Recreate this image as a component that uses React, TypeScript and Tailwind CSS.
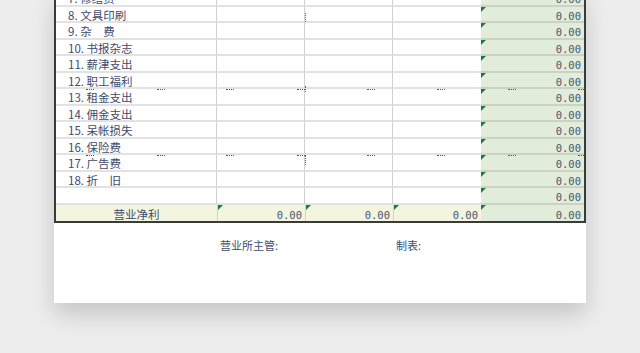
const rows = [
  '7. 修缮费',
  '8. 文具印刷',
  '9. 杂　费',
  '10. 书报杂志',
  '11. 薪津支出',
  '12. 职工福利',
  '13. 租金支出',
  '14. 佣金支出',
  '15. 呆帐损失',
  '16. 保险费',
  '17. 广告费',
  '18. 折　旧',
  '',
];

const dashXs = [86, 157, 226, 297, 367, 437, 508, 578];

function Flag() {
  return (
    <span className="absolute left-0 top-0 h-0 w-0 border-t-[5px] border-r-[5px] border-t-[#1f7a3a] border-r-transparent" />
  );
}

function Num() {
  return (
    <span className="font-['DejaVu_Sans_Mono','Liberation_Mono',monospace] text-[10.5px] leading-none text-[#4a536f]">
      0.00
    </span>
  );
}

export default function App() {
  return (
    <div className="relative h-[353px] w-[640px] overflow-hidden bg-[#ededed] font-['Noto_Sans_CJK_SC',sans-serif]">
      <div className="ml-[54px] mt-[-10px] w-[532px] bg-white shadow-[0_12px_22px_rgba(0,0,0,0.16)]">
        <div className="border-x-2 border-b-2 border-[#3a3a3a]">
          {rows.map((label, i) => (
            <div key={i} className="grid h-[16.5px] grid-cols-[161px_88px_88px_88px_103px]">
              <div className="flex items-end border-b-2 border-r border-b-[#e2e2e2] border-r-[#d0d0d0] pl-[12px] text-[11.5px] leading-none text-[#414b6c]">
                {label}
              </div>
              <div className="border-b-2 border-r border-b-[#e2e2e2] border-r-[#d0d0d0]" />
              <div className="border-b-2 border-r border-b-[#e2e2e2] border-r-[#d0d0d0]" />
              <div className="border-b-2 border-b-[#e2e2e2]" />
              <div className="relative flex items-end justify-end border-b-2 border-b-[#c9d3c2] bg-[#e1ecda] pr-[3px]">
                {i > 0 && <Flag />}
                <Num />
              </div>
            </div>
          ))}
          <div className="grid h-[16px] grid-cols-[161px_88px_88px_88px_103px]">
            <div className="flex items-end justify-center bg-[#f4f5df] text-[11.5px] leading-none text-[#414b6c]">
              营业净利
            </div>
            {[0, 1, 2].map((k) => (
              <div key={k} className="relative flex items-end justify-end border-l border-l-[#d0d0d0] bg-[#f4f5df] pr-[3px]">
                <Flag />
                <Num />
              </div>
            ))}
            <div className="relative flex items-end justify-end bg-[#e1ecda] pr-[3px]">
              <Flag />
              <Num />
            </div>
          </div>
        </div>
        <div className="flex h-[80px] pt-[14px] text-[11px] text-[#414b6c]">
          <span className="ml-[166px]">营业所主管:</span>
          <span className="ml-[118px]">制表:</span>
        </div>
      </div>

      {[89, 155].map((y) =>
        dashXs.map((x) => (
          <span
            key={`${y}-${x}`}
            className="absolute h-0 w-[8px] border-t border-dotted border-[#555]"
            style={{ left: x, top: y }}
          />
        ))
      )}
      <span className="absolute left-[305px] top-[13px] h-[9px] w-0 border-l border-dotted border-[#666]" />
      <span className="absolute left-[305px] top-[86px] h-[6px] w-0 border-l border-dotted border-[#666]" />
      <span className="absolute left-[305px] top-[155px] h-[10px] w-0 border-l border-dotted border-[#666]" />
    </div>
  );
}
